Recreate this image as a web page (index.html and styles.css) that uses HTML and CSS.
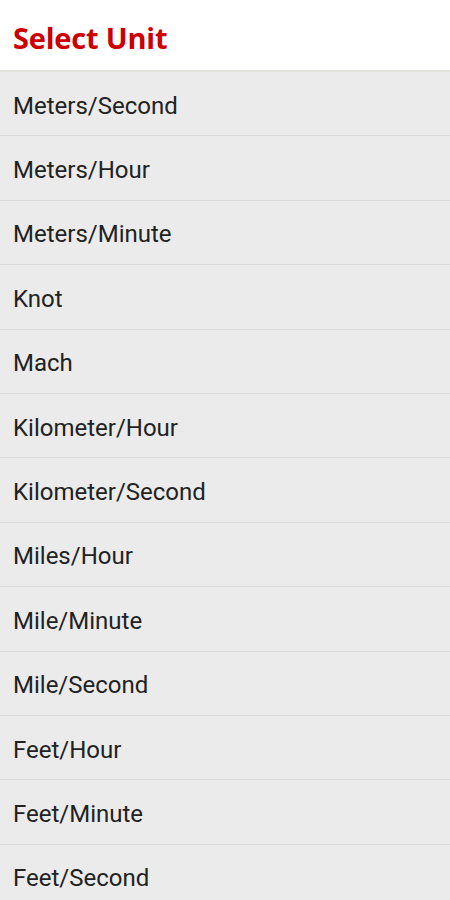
FILE: index.html
```html
<!DOCTYPE html>
<html lang="en">
<head>
  <meta charset="UTF-8">
  <meta name="viewport" content="width=device-width, initial-scale=1.0">
  <title>Select Unit</title>
  <link rel="stylesheet" href="styles.css">
</head>
<body>

  <header class="cabecalho">
    <h1>Select Unit</h1>
  </header>

  <ul class="lista-unidades">
    <li>Meters/Second</li>
    <li>Meters/Hour</li>
    <li>Meters/Minute</li>
    <li>Knot</li>
    <li>Mach</li>
    <li>Kilometer/Hour</li>
    <li>Kilometer/Second</li>
    <li>Miles/Hour</li>
    <li>Mile/Minute</li>
    <li>Mile/Second</li>
    <li>Feet/Hour</li>
    <li>Feet/Minute</li>
    <li>Feet/Second</li>
  </ul>

</body>
</html>
```

FILE: styles.css
```css
body {
  margin: 0;
  font-family: Roboto, "Noto Sans", sans-serif;
  background: #ebebeb;
  overflow: hidden;
}
.cabecalho {
  box-sizing: border-box;
  height: 72px;
  background: #fff;
  border-bottom: 2px solid #e2e2dc;
  display: flex;
  align-items: center;
  padding: 4px 13px 0;
}
.cabecalho h1 {
  margin: 0;
  font-family: "Open Sans", sans-serif;
  font-weight: 700;
  font-size: 29px;
  color: #cc0000;
  letter-spacing: -0.2px;
}
.lista-unidades {
  list-style: none;
  margin: 0;
  padding: 0;
}
.lista-unidades li {
  box-sizing: border-box;
  height: 64.4px;
  display: flex;
  align-items: center;
  padding: 4px 13px 0;
  font-size: 24px;
  color: #222;
  border-bottom: 1.5px solid #dadada;
}
```
